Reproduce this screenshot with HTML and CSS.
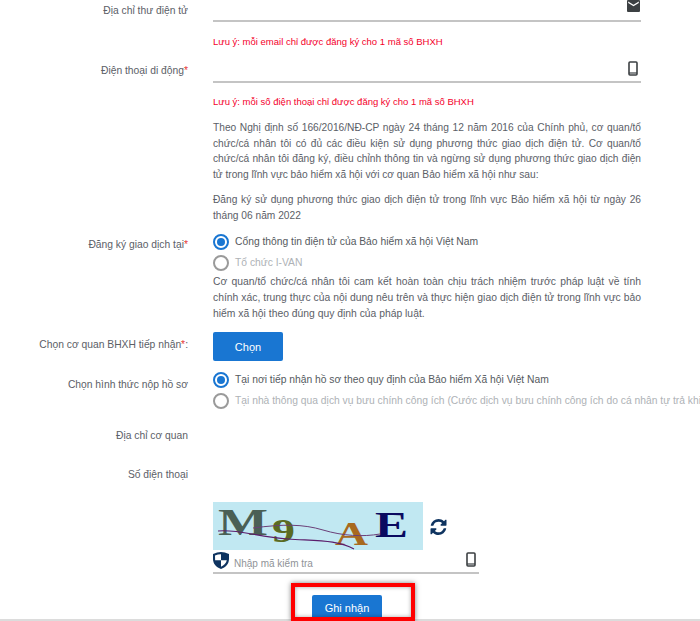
FILE: index.html
```html
<!DOCTYPE html>
<html lang="vi">
<head>
<meta charset="utf-8">
<title>Đăng ký</title>
<link rel="stylesheet" href="styles.css">
</head>
<body>
<main class="form">
  <div class="row row-input first">
    <label class="label">Địa chỉ thư điện tử</label>
    <div class="field">
      <svg class="icon" width="13" height="12" viewBox="0 0 13 12"><path fill="#3c4043" d="M1 0h11a1 1 0 0 1 1 1v10a1 1 0 0 1-1 1H1a1 1 0 0 1-1-1V1a1 1 0 0 1 1-1zm.2 1.500v1.500l5.300 3.200L11.800 3V1.500L6.500 4.700z"/></svg>
    </div>
  </div>
  <p class="note note-email">Lưu ý: mỗi email chỉ được đăng ký cho 1 mã số BHXH</p>
  <div class="row row-input">
    <label class="label">Điện thoại di động<span class="req">*</span></label>
    <div class="field">
      <svg class="icon-phone" width="10" height="15" viewBox="0 0 10 15"><rect x="1" y="1" width="8" height="13" rx="1" fill="none" stroke="#3c4043" stroke-width="1.600"/><path d="M1 12h8" stroke="#3c4043" stroke-width="1.200"/></svg>
    </div>
  </div>
  <p class="note note-phone">Lưu ý: mỗi số điện thoại chỉ được đăng ký cho 1 mã số BHXH</p>

  <div class="content content-first">
    <p class="para">Theo Nghị định số 166/2016/NĐ-CP ngày 24 tháng 12 năm 2016 của Chính phủ, cơ quan/tổ chức/cá nhân tôi có đủ các điều kiện sử dụng phương thức giao dịch điện tử. Cơ quan/tổ chức/cá nhân tôi đăng ký, điều chỉnh thông tin và ngừng sử dụng phương thức giao dịch điện tử trong lĩnh vực bảo hiểm xã hội với cơ quan Bảo hiểm xã hội như sau:</p>
    <p class="para para-second">Đăng ký sử dụng phương thức giao dịch điện tử trong lĩnh vực Bảo hiểm xã hội từ ngày 26 tháng 06 năm 2022</p>
  </div>

  <div class="row row-radio row-register">
    <label class="label">Đăng ký giao dịch tại<span class="req">*</span></label>
    <div class="radios">
      <div class="radio on"><span class="dot"></span><span>Cổng thông tin điện tử của Bảo hiểm xã hội Việt Nam</span></div>
      <div class="radio off"><span class="dot"></span><span>Tổ chức I-VAN</span></div>
    </div>
  </div>
  <div class="content">
    <p class="para para-commit">Cơ quan/tổ chức/cá nhân tôi cam kết hoàn toàn chịu trách nhiệm trước pháp luật về tính chính xác, trung thực của nội dung nêu trên và thực hiện giao dịch điện tử trong lĩnh vực bảo hiểm xã hội theo đúng quy định của pháp luật.</p>
  </div>

  <div class="row row-choose">
    <label class="label">Chọn cơ quan BHXH tiếp nhận<span class="req">*</span>:</label>
    <div><button class="btn btn-choose" type="button">Chọn</button></div>
  </div>

  <div class="row row-radio row-method">
    <label class="label">Chọn hình thức nộp hồ sơ</label>
    <div class="radios">
      <div class="radio on"><span class="dot"></span><span>Tại nơi tiếp nhận hồ sơ theo quy định của Bảo hiểm Xã hội Việt Nam</span></div>
      <div class="radio off"><span class="dot"></span><span>Tại nhà thông qua dịch vụ bưu chính công ích (Cước dịch vụ bưu chính công ích do cá nhân tự trả khi nhận kết quả)</span></div>
    </div>
  </div>

  <div class="row row-plain row-address"><label class="label">Địa chỉ cơ quan</label></div>
  <div class="row row-plain row-tel"><label class="label">Số điện thoại</label></div>

  <div class="content captcha-wrap">
    <div class="captcha-line">
      <svg class="captcha" width="210" height="48" viewBox="0 0 210 48">
        <rect width="210" height="48" fill="#c1e8f2"/>
        <text class="cap-m" x="5" y="33" textLength="50" lengthAdjust="spacingAndGlyphs">M</text>
        <text class="cap-9" x="59" y="40" textLength="23" lengthAdjust="spacingAndGlyphs">9</text>
        <text class="cap-a" x="122" y="43" textLength="33" lengthAdjust="spacingAndGlyphs">A</text>
        <text class="cap-e" x="162" y="35" textLength="33" lengthAdjust="spacingAndGlyphs">E</text>
        <path d="M5 29c20-2 40 6 70 8s50 1 66 10" fill="none" stroke="#5b1d6b" stroke-width="1.200"/>
        <path d="M40 26c30-4 50-4 70 2s40 7 57 4" fill="none" stroke="#6b3f78" stroke-width="1"/>
      </svg>
      <svg class="refresh" width="17" height="16" viewBox="0 0 1536 1536"><path fill="#0f3460" d="M1511 928q0 5-1 7-64 268-268 434.500T764 1536q-146 0-282.500-55T238 1324l-129 129q-19 19-45 19t-45-19-19-45V960q0-26 19-45t45-19h448q26 0 45 19t19 45-19 45l-137 137q71 66 161 102t187 36q134 0 250-65t186-179q11-17 53-117 8-23 30-23h192q13 0 22.500 9.500t9.500 22.500zm25-800v448q0 26-19 45t-45 19h-448q-26 0-45-19t-19-45 19-45l138-138Q969 256 768 256q-134 0-250 65T332 500q-11 17-53 117-8 23-30 23H50q-13 0-22.500-9.500T18 608v-7q65-268 270-434.500T768 0q146 0 284 55.500T1297 212l130-129q19-19 45-19t45 19 19 45z"/></svg>
    </div>
    <div class="captcha-input">
      <svg class="shield" width="16" height="17" viewBox="0 0 16 17"><path fill="#0f3460" d="M8 0c2.600 0 5 .8 8 2v5c0 5-3.500 8.500-8 10C3.500 15.500 0 12 0 7V2c3-1.200 5.400-2 8-2z"/><path fill="#fff" d="M8 2.200v6H2.100V7l-.1-3.600C4 2.700 6 2.200 8 2.200zM8 8.200h5.800C13.300 11 11 13.500 8 14.700z"/></svg>
      <span class="placeholder">Nhập mã kiểm tra</span>
      <svg class="icon-phone-small" width="10" height="15" viewBox="0 0 10 15"><rect x="1" y="1" width="8" height="13" rx="1" fill="none" stroke="#3c4043" stroke-width="1.600"/><path d="M1 12h8" stroke="#3c4043" stroke-width="1.200"/></svg>
    </div>
  </div>

  <div class="submit-row">
    <button class="btn btn-submit" type="button">Ghi nhận</button>
  </div>
</main>
<div class="page-line"></div>
<div class="highlight"></div>
</body>
</html>
```
FILE: styles.css
```css
* { box-sizing: border-box; }
html, body { margin: 0; height: 621px; overflow: hidden; background: #fff; }
body {
  position: relative;
  font-family: "Liberation Sans", Arial, sans-serif;
  font-size: 10.3px;
  color: #555a60;
}
.form { width: 700px; }
.row {
  display: grid;
  grid-template-columns: 188px 428px;
  column-gap: 25px;
}
.label { text-align: right; line-height: 14px; color: #5b6067; white-space: nowrap; }
.req { color: #e53935; }
.row-input { height: 30px; }
.row-input .label { padding-top: 7px; }
.first { height: 22px; padding-top: 3px; }
.first .label { padding-top: 1px; }
.field {
  height: 26px;
  border-bottom: 2px solid #c4c4c4;
  display: flex;
  justify-content: flex-end;
  align-items: flex-start;
}
.first .field { margin-top: -3px; height: 22px; }
.icon { margin: 0 1px 0 0; }
.icon-phone { margin: 4px 3px 0 0; }

.note {
  margin: 0 0 0 213px;
  color: #f4002b;
  line-height: 14px;
  font-size: 9.5px;
}
.note-email { padding-top: 13px; height: 35px; }
.note-phone { padding-top: 8px; height: 30px; }

.content { margin-left: 213px; width: 428px; }
.content-first { margin-top: 3px; }
.para {
  margin: 0;
  font-size: 10.2px;
  line-height: 15.7px;
  text-align: justify;
  color: #5b6067;
}
.para-second { margin-top: 9px; }
.para-commit { font-size: 10.35px; }

.row-register { margin-top: 11px; }
.radios { display: flex; flex-direction: column; gap: 5px; }
.radio { display: flex; align-items: center; gap: 6px; height: 16px; line-height: 16px; white-space: nowrap; }
.dot {
  width: 16px; height: 16px; border-radius: 50%;
  border: 2px solid #9a9a9a; flex: none; position: relative; background: #fff;
}
.on .dot { border-color: #1976d2; }
.on .dot::after {
  content: ""; position: absolute; inset: 2px; border-radius: 50%; background: #1976d2;
}
.on { color: #555a60; }
.off { color: #aeb2b6; }
.row-register .label { padding-top: 4px; }
.row-register + .content { margin-top: 3px; }

.row-choose { margin-top: 11px; height: 29px; }
.row-choose .label { padding-top: 6px; }
.btn {
  border: 0; border-radius: 2px; background: #1976d2; color: #fff;
  font: 11px "Liberation Sans", Arial, sans-serif;
  width: 70px; padding: 0; display: block;
}
.btn-choose { height: 29px; }

.row-method { margin-top: 10.5px; }
.row-method .label { padding-top: 6px; }

.row-plain { height: 14px; }
.row-address { margin-top: 20.5px; }
.row-tel { margin-top: 25px; }

.captcha-wrap { margin-top: 20px; width: 266px; }
.captcha-line { display: flex; align-items: center; gap: 7px; height: 48px; }
.captcha { display: block; flex: none; }
.refresh { flex: none; margin-top: 1px; }
.cap-m { font: bold 38px "Liberation Serif", serif; fill: #4a5f55; }
.cap-9 { font: bold 34px "Liberation Serif", serif; fill: #5a6b22; }
.cap-a { font: bold 34px "Liberation Serif", serif; fill: #a8691e; }
.cap-e { font: bold 36px "Liberation Serif", serif; fill: #0a0a60; }

.captcha-input {
  display: flex; align-items: flex-start; height: 24px;
  border-bottom: 2px solid #c4c4c4;
  padding-top: 2px;
}
.shield { margin-right: 5px; flex: none; }
.placeholder { flex: 1; color: #8f9397; font-size: 10px; padding-top: 5px; line-height: 14px; }
.icon-phone-small { margin: 0 3px 0 0; }

.submit-row { margin-left: 312px; margin-top: 21px; position: relative; z-index: 1; }
.btn-submit { height: 26px; }

.page-line {
  position: absolute; left: 0; right: 0; top: 619px; height: 2px; background: #dcdcdc;
}
.highlight {
  position: absolute; z-index: 2; left: 291px; top: 583px; width: 124px; height: 38px;
  border: 4px solid #ff0000;
  box-shadow: 0 0 5px rgba(0,0,0,.5), inset 0 0 4px rgba(0,0,0,.35);
}
```
